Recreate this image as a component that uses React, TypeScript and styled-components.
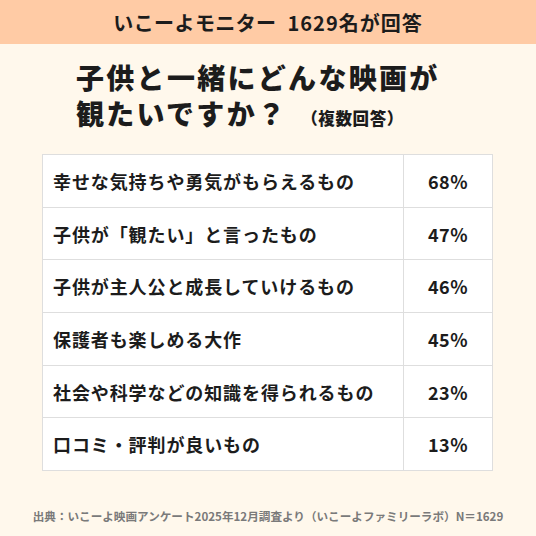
import React from 'react';
import styled, { createGlobalStyle } from 'styled-components';

const GlobalStyle = createGlobalStyle`
  html, body {
    margin: 0;
    padding: 0;
    background: #fff8ec;
  }
  * {
    box-sizing: border-box;
  }
`;

const FONT = `'Noto Sans CJK JP', 'Noto Sans', sans-serif`;

const Page = styled.div`
  width: 536px;
  height: 536px;
  display: flex;
  flex-direction: column;
  background: #fff8ec;
  font-family: ${FONT};
  color: #1c1c1c;
  overflow: hidden;
`;

const Banner = styled.header`
  height: 44px;
  display: flex;
  align-items: center;
  justify-content: center;
  background: #ffcba5;
  font-size: 20px;
  font-weight: 700;
  letter-spacing: 0.4px;
`;

const Count = styled.span`
  margin-left: 11px;
  letter-spacing: 1px;
`;

const Title = styled.h1`
  margin: 15px 0 0 76px;
  display: flex;
  flex-direction: column;
  font-size: 28px;
  font-weight: 900;
  letter-spacing: 2.3px;
`;

const TitleLine = styled.div`
  height: 36px;
  line-height: 36px;
  display: flex;
  align-items: baseline;
`;

const Note = styled.span`
  margin-left: 14px;
  font-size: 16.5px;
  letter-spacing: 0.6px;
`;

const Table = styled.div`
  margin: 23px 0 0 42px;
  width: 451px;
  display: grid;
  grid-template-columns: 361px 1fr;
  background: #ffffff;
  border-top: 1px solid #dedede;
  border-left: 1px solid #dedede;
`;

const Cell = styled.div<{ $value?: boolean }>`
  height: 52.7px;
  display: flex;
  align-items: center;
  justify-content: ${({ $value }) => ($value ? 'center' : 'flex-start')};
  padding-left: ${({ $value }) => ($value ? '0' : '10px')};
  border-right: 1px solid #dedede;
  border-bottom: 1px solid #dedede;
  font-size: 18px;
  font-weight: 700;
  letter-spacing: ${({ $value }) => ($value ? '0.5px' : '0.9px')};
`;

const Source = styled.footer`
  margin-top: auto;
  margin-bottom: 12px;
  text-align: center;
  font-size: 11.6px;
  font-weight: 700;
  color: #7a7a7a;
`;

const rows = [
  { label: '幸せな気持ちや勇気がもらえるもの', value: '68%' },
  { label: '子供が「観たい」と言ったもの', value: '47%' },
  { label: '子供が主人公と成長していけるもの', value: '46%' },
  { label: '保護者も楽しめる大作', value: '45%' },
  { label: '社会や科学などの知識を得られるもの', value: '23%' },
  { label: '口コミ・評判が良いもの', value: '13%' },
];

export default function App() {
  return (
    <Page>
      <GlobalStyle />
      <Banner>
        いこーよモニター<Count>1629名が回答</Count>
      </Banner>
      <Title>
        <TitleLine>子供と一緒にどんな映画が</TitleLine>
        <TitleLine>
          観たいですか？<Note>（複数回答）</Note>
        </TitleLine>
      </Title>
      <Table>
        {rows.map(row => (
          <React.Fragment key={row.label}>
            <Cell>{row.label}</Cell>
            <Cell $value>{row.value}</Cell>
          </React.Fragment>
        ))}
      </Table>
      <Source>出典：いこーよ映画アンケート2025年12月調査より（いこーよファミリーラボ）N＝1629</Source>
    </Page>
  );
}
